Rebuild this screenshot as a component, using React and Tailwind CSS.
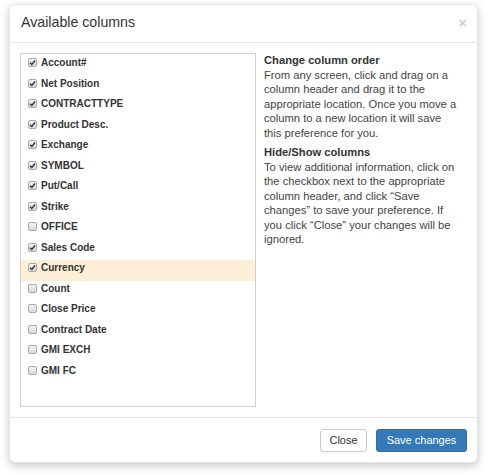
import { useState } from 'react';

const columns = [
  { name: 'Account#', checked: true },
  { name: 'Net Position', checked: true },
  { name: 'CONTRACTTYPE', checked: true },
  { name: 'Product Desc.', checked: true },
  { name: 'Exchange', checked: true },
  { name: 'SYMBOL', checked: true },
  { name: 'Put/Call', checked: true },
  { name: 'Strike', checked: true },
  { name: 'OFFICE', checked: false },
  { name: 'Sales Code', checked: true },
  { name: 'Currency', checked: true, active: true },
  { name: 'Count', checked: false },
  { name: 'Close Price', checked: false },
  { name: 'Contract Date', checked: false },
  { name: 'GMI EXCH', checked: false },
  { name: 'GMI FC', checked: false },
];

function Box({ checked }) {
  return (
    <span className="w-[9px] h-[9px] rounded-[2px] border border-[#a9a9a9] bg-gradient-to-b from-[#f4f4f4] to-[#d9d9d9] flex items-center justify-center shrink-0">
      {checked && (
        <svg width="7" height="7" viewBox="0 0 7 7">
          <path d="M1 3.8 L2.8 5.5 L6 1.5" fill="none" stroke="#333" strokeWidth="1.4" />
        </svg>
      )}
    </span>
  );
}

export default function App() {
  const [items, setItems] = useState(columns);

  const toggle = (i) =>
    setItems(items.map((c, j) => (j === i ? { ...c, checked: !c.checked } : c)));

  return (
    <div className="w-[488px] h-[474px] bg-white pt-[4px] pl-[9px] font-['Liberation_Sans',Arial,sans-serif] text-[#333]">
      <div className="w-[469px] bg-white rounded-[6px] border border-black/10 shadow-[0_3px_10px_rgba(0,0,0,0.22)]">
        {/* Header */}
        <div className="h-[38px] flex items-center justify-between pl-[11px] pr-[10px] pb-[3px] border-b border-[#e5e5e5]">
          <h4 className="text-[14.2px] leading-none">Available columns</h4>
          <span className="text-[15px] leading-none font-bold text-black/20">×</span>
        </div>

        {/* Body */}
        <div className="flex gap-[8px] pt-[10px] pb-[10px] px-[10px]">
          <div className="w-[236px] h-[354px] border border-[#cfcfcf] pt-[1px] shrink-0">
            {items.map((c, i) => (
              <label
                key={c.name}
                onClick={() => toggle(i)}
                className={`h-[20.5px] pb-[5px] pl-[7px] flex items-center gap-[4px] text-[10px] font-bold cursor-pointer ${
                  c.active ? 'bg-[#fcefd5]' : ''
                }`}
              >
                <Box checked={c.checked} />
                <span>{c.name}</span>
              </label>
            ))}
          </div>

          <div className="w-[197px] text-[11.2px] leading-[14.5px]">
            <p className="font-bold">Change column order</p>
            <p className="text-[#444]">
              From any screen, click and drag on a column header and drag it to the appropriate
              location. Once you move a column to a new location it will save this preference for
              you.
            </p>
            <p className="font-bold mt-[5px]">Hide/Show columns</p>
            <p className="text-[#444]">
              To view additional information, click on the checkbox next to the appropriate column
              header, and click “Save changes” to save your preference. If you click “Close” your
              changes will be ignored.
            </p>
          </div>
        </div>

        {/* Footer */}
        <div className="flex justify-end gap-[9px] pt-[11px] pb-[10px] pr-[10px] border-t border-[#e5e5e5]">
          <button className="h-[23px] w-[47px] rounded-[3px] border border-[#ccc] bg-white text-[11px] text-[#333]">
            Close
          </button>
          <button className="h-[23px] w-[91px] rounded-[3px] border border-[#2e6da4] bg-[#337ab7] text-[11px] text-white">
            Save changes
          </button>
        </div>
      </div>
    </div>
  );
}
